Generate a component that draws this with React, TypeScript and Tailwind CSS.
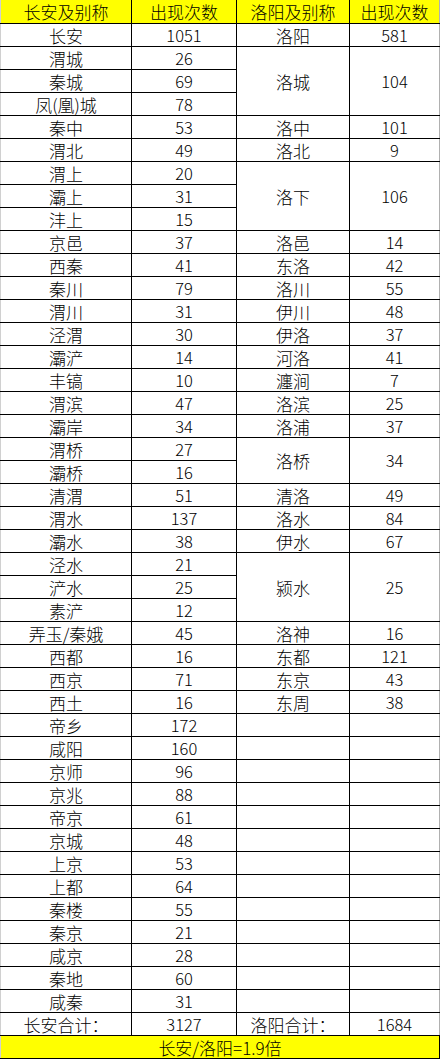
import React from "react";

const left: [string, number][] = [
  ["长安", 1051],
  ["渭城", 26],
  ["秦城", 69],
  ["凤(凰)城", 78],
  ["秦中", 53],
  ["渭北", 49],
  ["渭上", 20],
  ["灞上", 31],
  ["沣上", 15],
  ["京邑", 37],
  ["西秦", 41],
  ["秦川", 79],
  ["渭川", 31],
  ["泾渭", 30],
  ["灞浐", 14],
  ["丰镐", 10],
  ["渭滨", 47],
  ["灞岸", 34],
  ["渭桥", 27],
  ["灞桥", 16],
  ["清渭", 51],
  ["渭水", 137],
  ["灞水", 38],
  ["泾水", 21],
  ["浐水", 25],
  ["素浐", 12],
  ["弄玉/秦娥", 45],
  ["西都", 16],
  ["西京", 71],
  ["西土", 16],
  ["帝乡", 172],
  ["咸阳", 160],
  ["京师", 96],
  ["京兆", 88],
  ["帝京", 61],
  ["京城", 48],
  ["上京", 53],
  ["上都", 64],
  ["秦楼", 55],
  ["秦京", 21],
  ["咸京", 28],
  ["秦地", 60],
  ["咸秦", 31],
];

// right column entries: [name, count, rowSpan]
const rightList: [string, number, number][] = [
  ["洛阳", 581, 1],
  ["洛城", 104, 3],
  ["洛中", 101, 1],
  ["洛北", 9, 1],
  ["洛下", 106, 3],
  ["洛邑", 14, 1],
  ["东洛", 42, 1],
  ["洛川", 55, 1],
  ["伊川", 48, 1],
  ["伊洛", 37, 1],
  ["河洛", 41, 1],
  ["瀍涧", 7, 1],
  ["洛滨", 25, 1],
  ["洛浦", 37, 1],
  ["洛桥", 34, 2],
  ["清洛", 49, 1],
  ["洛水", 84, 1],
  ["伊水", 67, 1],
  ["颍水", 25, 3],
  ["洛神", 16, 1],
  ["东都", 121, 1],
  ["东京", 43, 1],
  ["东周", 38, 1],
];

const rightAt: Record<number, [string, number, number]> = {};
const covered = new Set<number>();
let idx = 0;
for (const r of rightList) {
  rightAt[idx] = r;
  for (let k = 1; k < r[2]; k++) covered.add(idx + k);
  idx += r[2];
}

const cjk = "[font-family:'Noto_Sans_CJK_SC',sans-serif] text-[17px] font-light";
const num = "[font-family:'Noto_Sans_CJK_SC',sans-serif] text-[16.5px] font-light";
const cell = "border border-black text-center align-middle p-0 pt-px leading-[21px] text-black";

export default function App() {
  return (
    <div className="w-[440px] h-[1059px] bg-white overflow-hidden">
      <table className="table-fixed border-collapse w-[439px] border-l border-l-[#d0d0d0]">
        <colgroup>
          <col className="w-[131px]" />
          <col className="w-[105px]" />
          <col className="w-[113px]" />
          <col className="w-[90px]" />
        </colgroup>
        <tbody>
          <tr className="h-[23px] bg-[#ffff00]">
            <td className={`${cell} ${cjk} border-t-0 border-l-[#d0d0d0]`}>长安及别称</td>
            <td className={`${cell} ${cjk} border-t-0`}>出现次数</td>
            <td className={`${cell} ${cjk} border-t-0`}>洛阳及别称</td>
            <td className={`${cell} ${cjk} border-t-0 border-r-[#b0b0b0]`}>出现次数</td>
          </tr>
          {left.map(([name, count], i) => {
            const r = rightAt[i];
            const isEmpty = i >= idx;
            return (
              <tr key={name} className="h-[23px]">
                <td className={`${cell} ${cjk} border-l-[#d0d0d0]`}>{name}</td>
                <td className={`${cell} ${num}`}>{count}</td>
                {r && (
                  <>
                    <td rowSpan={r[2]} className={`${cell} ${cjk}`}>
                      {r[0]}
                    </td>
                    <td rowSpan={r[2]} className={`${cell} ${num} border-r-[#b0b0b0]`}>
                      {r[1]}
                    </td>
                  </>
                )}
                {isEmpty && !covered.has(i) && (
                  <>
                    <td className={cell}></td>
                    <td className={`${cell} border-r-[#b0b0b0]`}></td>
                  </>
                )}
              </tr>
            );
          })}
          <tr className="h-[23px]">
            <td className={`${cell} ${cjk} border-l-[#d0d0d0]`}>长安合计：</td>
            <td className={`${cell} ${num}`}>3127</td>
            <td className={`${cell} ${cjk}`}>洛阳合计：</td>
            <td className={`${cell} ${num} border-r-[#b0b0b0]`}>1684</td>
          </tr>
          <tr className="h-[23px] bg-[#ffff00]">
            <td colSpan={4} className={`${cell} ${cjk} border-l-[#d0d0d0]`}>
              长安/洛阳=1.9倍
            </td>
          </tr>
        </tbody>
      </table>
    </div>
  );
}
